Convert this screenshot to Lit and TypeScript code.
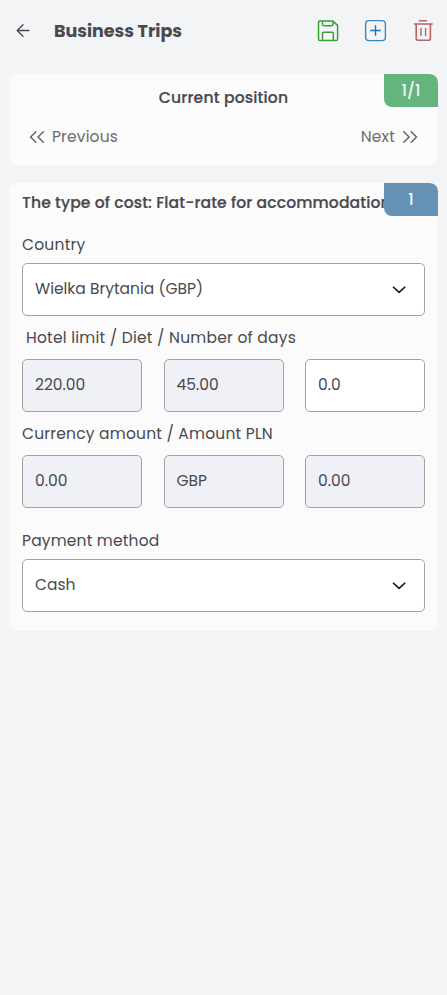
import { LitElement, html, css, svg } from "lit";
import { customElement, property } from "lit/decorators.js";
import { classMap } from "lit/directives/class-map.js";

const chevron = html`<svg class="chevron" width="14" height="8" viewBox="0 0 14 8" fill="none" stroke="#161a3a" stroke-width="1.6" stroke-linecap="round" stroke-linejoin="round">
  <path d="M1.4 1.2 7.1 6.4 12.8 1.2" />
</svg>`;

const doubleArrow = (d: string) => html`<svg width="16" height="14" viewBox="0 0 16 14" fill="none" stroke="#5f5f62" stroke-width="1.4" stroke-linecap="round">
  ${svg`<path d=${d} />`}
</svg>`;

@customElement("form-field")
export class FormField extends LitElement {
  @property() value = "";
  @property({ type: Boolean }) locked = false;
  @property({ type: Boolean }) dropdown = false;

  static styles = css`
    :host { display: block; min-width: 0; }
    .box {
      box-sizing: border-box;
      height: 53px;
      display: flex;
      align-items: center;
      justify-content: space-between;
      padding: 0 18px 1px 12px;
      border: 1px solid #a2a2a4;
      border-radius: 5px;
      background: #fff;
      color: #49494f;
      white-space: pre;
    }
    .locked { background: #f0f1f6; }
    .chevron { margin-top: 2px; }
  `;

  render() {
    return html`<div class=${classMap({ box: true, locked: this.locked })}>
      <span>${this.value}</span>${this.dropdown ? chevron : ""}
    </div>`;
  }
}

@customElement("app-root")
export class AppRoot extends LitElement {
  static styles = css`
    :host {
      display: block;
      box-sizing: border-box;
      min-height: 995px;
      padding: 0 9px;
      background: #f2f4f6;
      color: #49494f;
      font: 400 15.5px/24px Poppins, Inter, sans-serif;
      white-space: nowrap;
    }
    header { height: 74px; display: flex; align-items: flex-start; }
    .back { margin: 24px 0 0 7px; }
    h1 {
      flex: 1;
      margin: 19px 0 0 24px;
      font-size: 17.5px;
      line-height: 24px;
      font-weight: 700;
      letter-spacing: -0.05px;
    }
    .tools { display: flex; gap: 24px; margin: 19px 2px 0 0; }
    .card {
      position: relative;
      box-sizing: border-box;
      width: 429px;
      border-radius: 8px;
      background: #fbfbfb;
      overflow: hidden;
    }
    .position { height: 91px; padding: 12px 20px 0; }
    h2 { margin: 0; font-size: 15.6px; line-height: 24px; font-weight: 500; letter-spacing: 0.11px; -webkit-text-stroke: 0.2px #49494f; }
    .position h2 { text-align: center; letter-spacing: 0.17px; }
    .pager { display: flex; justify-content: space-between; margin-top: 15px; color: #6d6d70; }
    .pager span { display: flex; align-items: center; gap: 7px; }
    .prev { letter-spacing: 0.15px; }
    .next { letter-spacing: 0.15px; }
    .badge {
      position: absolute;
      top: 0;
      right: 0;
      width: 54px;
      height: 33px;
      line-height: 33px;
      border-radius: 0 8px 0 8px;
      text-align: center;
      font-weight: 500;
      color: #f4f8f6;
    }
    .green { background: #65b47e; }
    .blue { background: #6592b4; }
    .cost { height: 448px; margin-top: 18px; padding: 8px 13px 0; }
    .label { display: block; letter-spacing: 0.23px; }
    .country { margin: 18px 0 6px; }
    .limits { margin: 10px 0 9px 4px; }
    .amounts { margin: 10px 0 9px; letter-spacing: 0.2px; }
    .payment { margin: 21px 0 6px; letter-spacing: 0.17px; }
    .row { display: grid; grid-template-columns: repeat(3, 120px); justify-content: space-between; }
  `;

  render() {
    return html`
      <header>
        <svg class="back" width="14" height="14" viewBox="0 0 14 14" fill="none" stroke="#49494f" stroke-width="1.35" stroke-linecap="round" stroke-linejoin="round">
          <path d="M13 6.5H1.2M7 .8 1.2 6.5 7 12.4" />
        </svg>
        <h1>Business Trips</h1>
        <div class="tools">
          <svg width="24" height="24" viewBox="0 0 24 24" fill="none" stroke="#3c9f35" stroke-width="1.5" stroke-linejoin="round">
            <path d="M3.8 1.9H16.6L21.6 6.4V20a1.6 1.6 0 0 1-1.6 1.6H4.1a1.6 1.6 0 0 1-1.6-1.6V3.3a1.4 1.4 0 0 1 1.3-1.4Z" />
            <path d="M6.5 2V5.3a1.4 1.4 0 0 0 1.4 1.4H15.7a1.4 1.4 0 0 0 1.4-1.4V2M6.5 21.4V14.6a1.4 1.4 0 0 1 1.4-1.4H15.9a1.4 1.4 0 0 1 1.4 1.4V21.4" />
          </svg>
          <svg width="24" height="24" viewBox="0 0 24 24" fill="none" stroke="#3c87c0" stroke-width="1.4">
            <rect x="1.6" y="1.6" width="19.8" height="20" rx="3.4" />
            <path d="M11.5 6.2V16.8M6.2 11.5H16.8" stroke="#276fae" />
          </svg>
          <svg width="24" height="24" viewBox="0 0 24 24" fill="none" stroke="#b96464" stroke-width="1.6">
            <path d="M6.9 1.8H15.1M1.9 5H20.7" />
            <path d="M4.2 5V19.2a2 2 0 0 0 2 2H16.4a2 2 0 0 0 2-2V5" />
            <path d="M9 9V17M13.6 9V17" stroke-width="1.4" />
          </svg>
        </div>
      </header>
      <section class="card position">
        <h2>Current position</h2>
        <div class="pager">
          <span class="prev">${doubleArrow("M6.9 1.8 1.6 7 6.9 12.2M14.3 1.8 9 7 14.3 12.2")}Previous</span>
          <span class="next">Next${doubleArrow("M1.8 1.8 7.1 7 1.8 12.2M9.2 1.8 14.5 7 9.2 12.2")}</span>
        </div>
        <div class="badge green">1/1</div>
      </section>
      <section class="card cost">
        <h2>The type of cost: Flat-rate for accommodation</h2>
        <div class="badge blue">1</div>
        <span class="label country">Country</span>
        <form-field value="Wielka Brytania (GBP)" dropdown></form-field>
        <span class="label limits">Hotel limit / Diet / Number of days</span>
        <div class="row">
          <form-field value="220.00" locked></form-field>
          <form-field value="45.00" locked></form-field>
          <form-field value="0.0"></form-field>
        </div>
        <span class="label amounts">Currency amount / Amount PLN</span>
        <div class="row">
          <form-field value="0.00" locked></form-field>
          <form-field value="GBP" locked></form-field>
          <form-field value="0.00" locked></form-field>
        </div>
        <span class="label payment">Payment method</span>
        <form-field value="Cash" dropdown></form-field>
      </section>
    `;
  }
}
